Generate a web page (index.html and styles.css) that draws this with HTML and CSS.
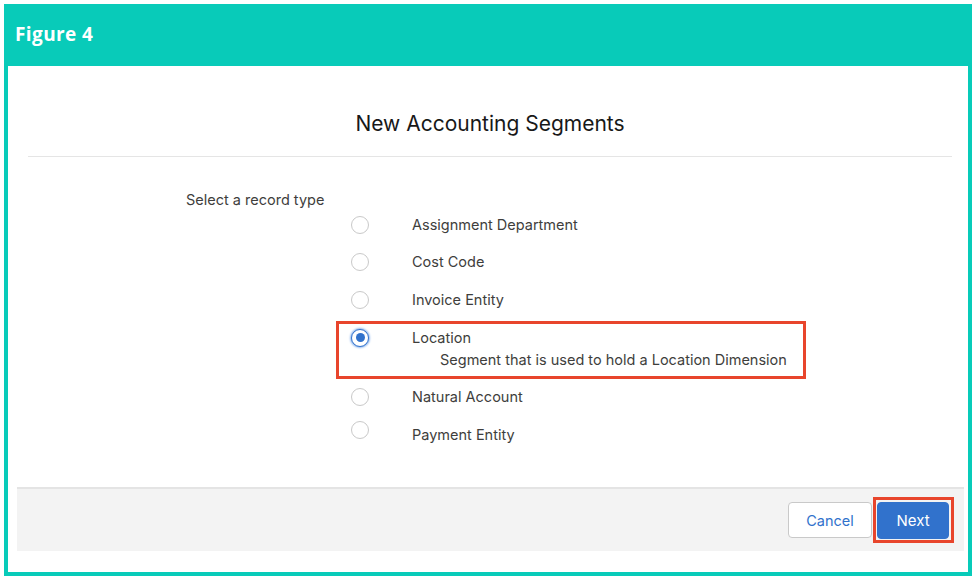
FILE: index.html
```html
<!DOCTYPE html>
<html lang="en">
    <head>
        <meta charset="UTF-8">
        <meta name="viewport" content="width=device-width, initial-scale=1.0">
        <title>Figure 4</title>
        <link rel="stylesheet" href="styles.css">
    </head>
    <body>
        <div class="frame">
            <div class="figure-head">Figure 4</div>

            <div class="modal">
                <h2 class="modal-title">New Accounting Segments</h2>

                <div class="form">
                    <div class="form-label">Select a record type</div>
                    <div class="options">
                        <label class="option">
                            <span class="radio"></span>
                            <span class="option-name">Assignment Department</span>
                        </label>
                        <label class="option">
                            <span class="radio"></span>
                            <span class="option-name">Cost Code</span>
                        </label>
                        <label class="option">
                            <span class="radio"></span>
                            <span class="option-name">Invoice Entity</span>
                        </label>
                        <label class="option selected">
                            <span class="radio checked"></span>
                            <span class="option-text">
                                <span class="option-name">Location</span>
                                <span class="option-desc">Segment that is used to hold a Location Dimension</span>
                            </span>
                        </label>
                        <label class="option">
                            <span class="radio"></span>
                            <span class="option-name">Natural Account</span>
                        </label>
                        <label class="option last">
                            <span class="radio"></span>
                            <span class="option-name">Payment Entity</span>
                        </label>
                    </div>
                </div>

                <div class="modal-footer">
                    <button class="btn btn-neutral">Cancel</button>
                    <span class="highlight">
                        <button class="btn btn-brand">Next</button>
                    </span>
                </div>
            </div>
        </div>
    </body>
</html>
```

FILE: styles.css
```css
body {
    margin: 0;
    background: #fff;
    font-family: Inter, "Liberation Sans", Arial, sans-serif;
}
.frame {
    margin: 4px;
    width: 960px;
    padding: 0 4px 4px;
    background: #08cbb9;
}
.figure-head {
    height: 62px;
    line-height: 60px;
    padding-left: 7px;
    color: #fff;
    font-family: "Open Sans", sans-serif;
    font-weight: 700;
    font-size: 19px;
    letter-spacing: 0.4px;
}
.modal {
    height: 506px;
    background: #fff;
    display: flex;
    flex-direction: column;
}
.modal-title {
    margin: 44px 16px 0 20px;
    padding-bottom: 18px;
    border-bottom: 1px solid #e5e5e5;
    text-align: center;
    font-weight: 400;
    font-size: 21px;
    line-height: 28px;
    color: #181818;
}
.form {
    padding-left: 178px;
    margin-top: 33px;
    font-size: 14.5px;
    color: #3e3e3c;
}
.form-label {
    line-height: 20px;
}
.options {
    margin-top: -4px;
    padding-left: 165px;
}
.option {
    display: flex;
    align-items: center;
    height: 37.5px;
    line-height: 20px;
}
.option-name {
    margin-left: 43px;
}
.radio {
    width: 16px;
    height: 16px;
    border: 1px solid #c9c9c9;
    border-radius: 50%;
    background: #fff;
    flex: none;
    box-sizing: content-box;
}
.radio.checked {
    border-color: #3172cc;
    box-shadow: 0 0 2px 1px #8db6ee;
    display: flex;
    align-items: center;
    justify-content: center;
}
.radio.checked::after {
    content: "";
    width: 9px;
    height: 9px;
    border-radius: 50%;
    background: #3172cc;
}
.option.selected {
    height: auto;
    align-items: flex-start;
    width: 470px;
    box-sizing: border-box;
    margin: 2px 0 0 -15px;
    padding: 4px 0 6px 12px;
    border: 3px solid #e8452c;
}
.option.selected .radio {
    margin-top: 1px;
}
.option-text {
    display: flex;
    flex-direction: column;
}
.option-desc {
    margin: 2px 0 0 71px;
}
.option.last .radio {
    margin-top: -9px;
}
.modal-footer {
    margin: auto 4px 21px 9px;
    height: 62px;
    border-top: 2px solid #e4e4e4;
    background: #f3f3f3;
    display: flex;
    align-items: center;
    justify-content: flex-end;
    padding-right: 10px;
}
.btn {
    font-family: Inter, "Liberation Sans", Arial, sans-serif;
    font-size: 14.5px;
    height: 36px;
    border-radius: 4px;
    cursor: pointer;
}
.btn-neutral {
    width: 84px;
    background: #fff;
    border: 1px solid #c9c9c9;
    color: #3172cc;
    margin-right: 1px;
}
.btn-brand {
    width: 72px;
    height: 37px;
    background: #3172cc;
    border: 1px solid #3172cc;
    color: #fff;
    font-size: 15px;
    display: block;
}
.highlight {
    display: block;
    border: 3px solid #e8452c;
    padding: 2px 2px 1px 1px;
}
```
